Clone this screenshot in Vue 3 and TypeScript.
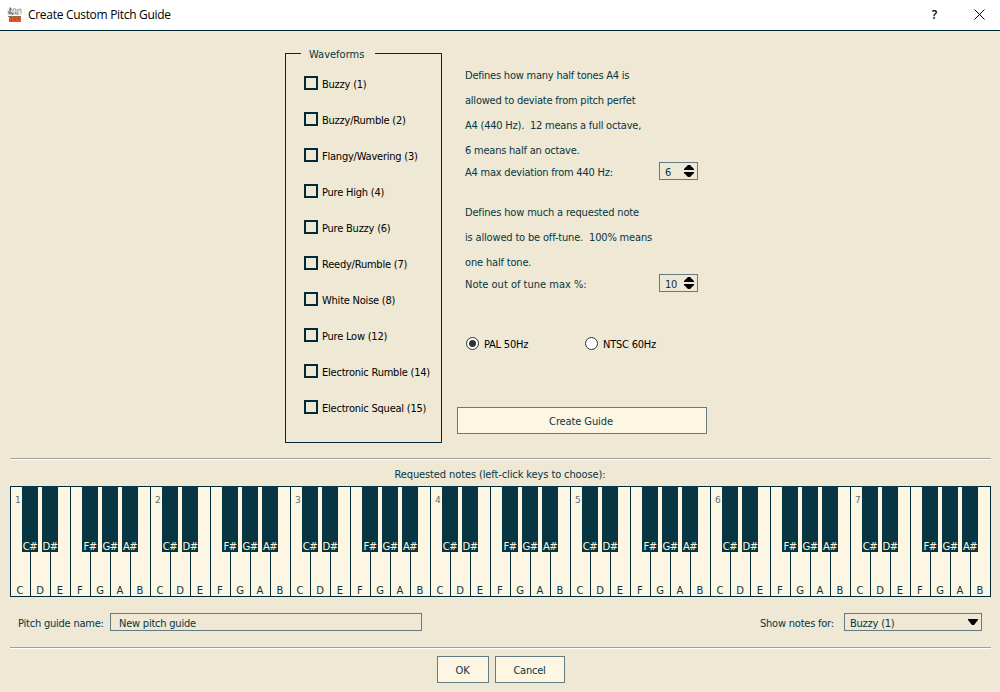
<script setup lang="ts">
import { ref } from 'vue'

interface Waveform { label: string; checked: boolean }

const waveforms = ref<Waveform[]>([
  'Buzzy (1)', 'Buzzy/Rumble (2)', 'Flangy/Wavering (3)', 'Pure High (4)', 'Pure Buzzy (6)',
  'Reedy/Rumble (7)', 'White Noise (8)', 'Pure Low (12)', 'Electronic Rumble (14)', 'Electronic Squeal (15)',
].map((label) => ({ label, checked: false })))

const octaves = [1, 2, 3, 4, 5, 6, 7]
const notes = ['C', 'D', 'E', 'F', 'G', 'A', 'B']
const sharps = new Set(['C', 'D', 'F', 'G', 'A'])
const deviationHelp = [
  'Defines how many half tones A4 is',
  'allowed to deviate from pitch perfet',
  'A4 (440 Hz).  12 means a full octave,',
  '6 means half an octave.',
]
const tuneHelp = ['Defines how much a requested note', 'is allowed to be off-tune.  100% means', 'one half tone.']
const deviation = ref(6)
const outOfTune = ref(10)
const region = ref<'PAL' | 'NTSC'>('PAL')
const guideName = ref('New pitch guide')
</script>

<template>
  <div class="dialog">
    <header class="titlebar">
      <svg class="logo" width="16" height="16" viewBox="0 0 16 16">
        <path d="M3 0.5v7M3 1l1.500 1-3 3 1 2 2-1-1-1.500" fill="none" stroke="#555" stroke-width="1" />
        <path d="M6 2h3v4M6 2v5M11 2v5M11 2.500l3-.5v4.500" fill="none" stroke="#999" stroke-width="1" />
        <path d="M0 4h14M0 7h14" stroke="#bbb" stroke-width=".7" />
        <circle cx="5.500" cy="7" r="1" fill="#666" /><circle cx="8.500" cy="6" r="1" fill="#888" /><circle cx="10.500" cy="7" r="1" fill="#999" />
        <rect x="2" y="10" width="12" height="5" fill="#e2571d" />
        <path d="M1 9.500h13" stroke="#8a6a5c" />
        <path d="M4.500 11v3M8 10v4M11.500 10v3" stroke="#b04a20" />
      </svg>
      <span class="title">Create Custom Pitch Guide</span>
      <span class="help">?</span>
      <svg class="close" width="11" height="11" viewBox="0 0 11 11"><path d="M.5 .5l10 10M10.500 .5l-10 10" stroke="#000" fill="none" /></svg>
    </header>

    <main class="settings">
      <section class="waves">
        <h2 class="legend">Waveforms</h2>
        <div v-for="w in waveforms" :key="w.label" class="check" @click="w.checked = !w.checked">
          <i class="box" :class="{ on: w.checked }"></i><span>{{ w.label }}</span>
        </div>
      </section>

      <section class="options">
        <p v-for="l in deviationHelp" :key="l" class="line">{{ l }}</p>
        <div class="field">
          <span class="field-label">A4 max deviation from 440 Hz:</span>
          <div class="spin"><span>{{ deviation }}</span>
            <svg width="10" height="12" viewBox="0 0 10 12"><path d="M4 0h2l4 4v1H0V4zM0 7h10v1l-4 4H4L0 8z" /></svg>
          </div>
        </div>
        <p v-for="l in tuneHelp" :key="l" class="line tune">{{ l }}</p>
        <div class="field">
          <span class="field-label">Note out of tune max %:</span>
          <div class="spin"><span>{{ outOfTune }}</span>
            <svg width="10" height="12" viewBox="0 0 10 12"><path d="M4 0h2l4 4v1H0V4zM0 7h10v1l-4 4H4L0 8z" /></svg>
          </div>
        </div>
        <div class="radios">
          <div class="radio" @click="region = 'PAL'"><i class="dot" :class="{ on: region === 'PAL' }"></i><span>PAL 50Hz</span></div>
          <div class="radio" @click="region = 'NTSC'"><i class="dot" :class="{ on: region === 'NTSC' }"></i><span>NTSC 60Hz</span></div>
        </div>
        <button class="btn create"><span>Create Guide</span></button>
      </section>
    </main>

    <hr class="sep" />
    <p class="caption"><span>Requested notes (left-click keys to choose):</span></p>
    <div class="piano">
      <template v-for="o in octaves" :key="o">
        <div v-for="n in notes" :key="n" class="key">
          <span v-if="n === 'C'" class="octave">{{ o }}</span>
          <span class="note">{{ n }}</span>
          <div v-if="sharps.has(n)" class="black"><span>{{ n }}#</span></div>
        </div>
      </template>
    </div>
    <div class="bottom">
      <span class="name-label">Pitch guide name:</span>
      <div class="input"><span>{{ guideName }}</span></div>
      <span class="show-label">Show notes for:</span>
      <div class="select"><span>Buzzy (1)</span>
        <svg width="10" height="6" viewBox="0 0 10 6"><path d="M0 0h10v1L6 6H4L0 1z" /></svg>
      </div>
    </div>
    <hr class="sep" />
    <footer class="actions">
      <button class="btn ok"><span>OK</span></button>
      <button class="btn cancel"><span>Cancel</span></button>
    </footer>
  </div>
</template>

<style>
body { margin: 0; background: #eee8d5; }
</style>

<style scoped>
.dialog {
  width: 1000px; height: 692px; overflow: hidden; background: #eee8d5; color: #073642;
  font: 11px/14px "DejaVu Sans Condensed", "DejaVu Sans", sans-serif; font-stretch: condensed;
  letter-spacing: -0.22px; white-space: pre;
}
.dialog * { box-sizing: border-box; }
p, h2 { margin: 0; font-weight: normal; font-size: inherit; }
.titlebar {
  height: 31px; background: #fff; border-bottom: 1px solid #002b36; display: flex; align-items: center;
  padding: 0 15px 0 7px; color: #000; font: 12px/16px "Open Sans", "Noto Sans", sans-serif; letter-spacing: -0.3px;
}
.title { margin-left: 5px; flex: 1; }
.help { margin-right: 37px; font-weight: 600; }
.close { margin-bottom: 2px; }
.settings { display: flex; height: 427px; padding: 22px 0 0 285px; }
.waves {
  position: relative; width: 157px; height: 390px; border: 1px solid #002b36; padding: 11px 0 0 18px; color: #000;
}
.legend {
  position: absolute; top: -6px; left: 15px; width: 74px; padding-left: 8px; height: 14px;
  background: #eee8d5; color: #073642; letter-spacing: 0;
}
.check { display: flex; align-items: center; height: 36px; gap: 4px; }
.check span { padding-top: 3px; }
.box { width: 14px; height: 14px; border: 2px solid #002b36; }
.box.on { background: #002b36; box-shadow: inset 0 0 0 2px #eee8d5; }
.options { margin-left: 15px; width: 250px; padding-top: 10px; }
.line { height: 25px; line-height: 25px; padding-left: 8px; }
.tune { letter-spacing: -0.17px; }
.field { display: flex; justify-content: space-between; align-items: center; height: 18px; padding: 0 9px 0 8px; margin-bottom: 19px; }
.field-label { padding-top: 2px; }
.tune + .field .field-label { letter-spacing: 0; }
.spin {
  width: 39px; height: 18px; border: 1px solid #657b83; display: flex; align-items: center;
  justify-content: space-between; padding: 0 3px 0 5px; margin-bottom: 2px;
}
.spin span { padding-top: 3px; }
.select span { padding-top: 2px; }
.spin svg, .select svg { fill: #000; }
.select svg { margin-bottom: 1px; }
.radios { display: flex; margin-top: 43px; padding-left: 9px; color: #000; }
.radio { display: flex; align-items: center; gap: 5px; width: 119px; height: 15px; }
.radio span { padding-top: 2px; }
.dot { width: 13px; height: 13px; border: 1px solid #333; border-radius: 50%; background: #fff; display: grid; place-items: center; }
.dot.on::after { content: ""; width: 7px; height: 7px; border-radius: 50%; background: #333; }
.btn {
  display: flex; align-items: center; justify-content: center; height: 27px; padding: 2px 1px 0 0; color: #073642;
  border: 1px solid #657b83; background: #fdf6e3; font: inherit; letter-spacing: inherit;
}
.create { width: 250px; margin-top: 56px; letter-spacing: -0.1px; padding-right: 2px; }
.sep { height: 2px; margin: 0 9px 0 10px; border: 0; border-top: 1px solid #a0a0a0; background: #fff; }
.caption { height: 26px; padding-top: 8px; text-align: center; letter-spacing: -0.11px; }
.piano { display: flex; width: 981px; height: 111px; margin-left: 10px; border: 1px solid #002b36; border-left: 0; background: #fdf6e3; }
.key { position: relative; flex: none; width: 20px; height: 109px; border-left: 1px solid #002b36; font: 10px/12px "DejaVu Sans", sans-serif; letter-spacing: 0; }
.note { position: absolute; left: -1px; width: 20px; bottom: -1px; text-align: center; }
.octave { position: absolute; left: 4px; top: 7px; font-size: 9px; color: #586e75; }
.black {
  position: absolute; z-index: 1; left: 11px; top: -1px; width: 16px; height: 66px; background: #073642;
  color: #fdf6e3; display: flex; align-items: flex-end; justify-content: center; letter-spacing: -0.5px; line-height: 10px;
}
.bottom { display: flex; align-items: center; height: 50px; padding: 0 18px; }
.name-label { width: 92px; padding-top: 3px; }
.input { width: 312px; height: 18px; border: 1px solid #657b83; padding: 2px 8px; }
.input span { display: block; padding-top: 1px; }
.show-label { margin-left: auto; width: 84px; padding-top: 3px; }
.select {
  width: 138px; height: 18px; border: 1px solid #657b83; display: flex; align-items: center;
  justify-content: space-between; padding: 0 3px 0 5px;
}
.bottom .select span { padding-top: 3px; }
.actions { display: flex; gap: 6px; padding: 7px 0 0 437px; }
.ok { width: 52px; }
.cancel { width: 70px; }
</style>
